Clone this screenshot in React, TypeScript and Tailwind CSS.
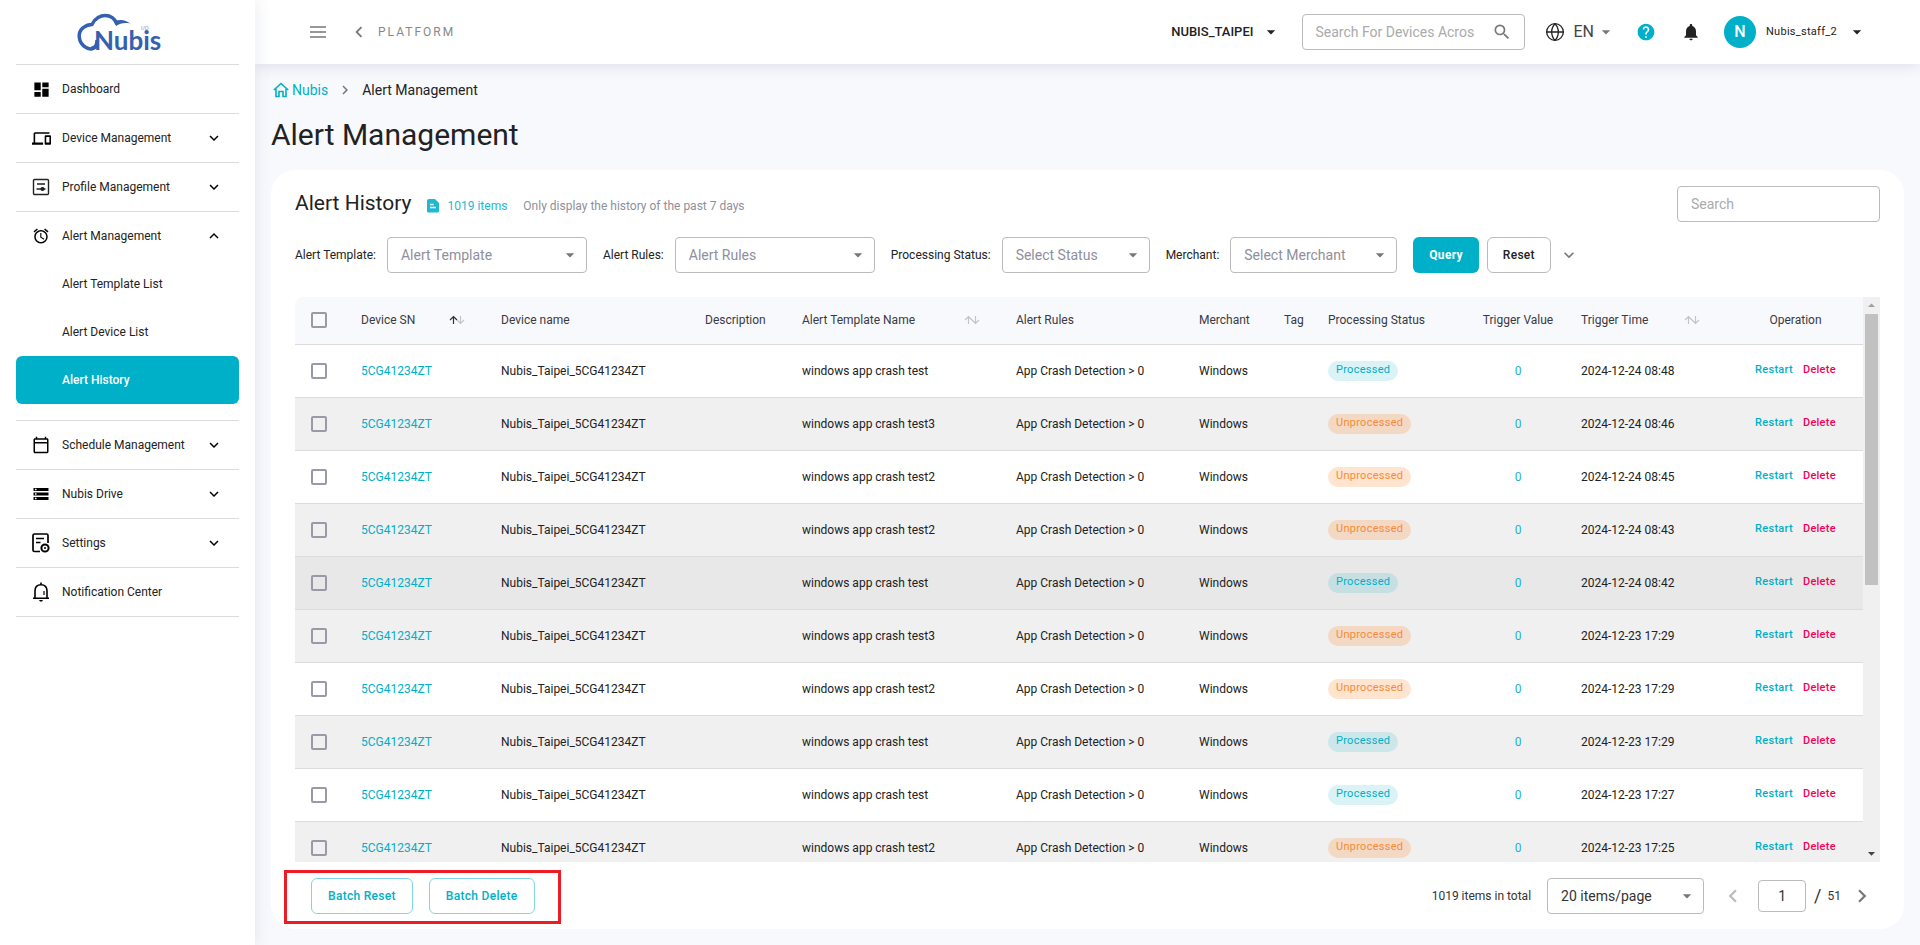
import { type ReactNode } from 'react'
import clsx from 'clsx'
import { Globe } from 'lucide-react'
import {
    MdAlarm,
    MdArrowDropDown,
    MdArrowDropUp,
    MdChevronLeft,
    MdChevronRight,
    MdDashboard,
    MdDevices,
    MdExpandLess,
    MdExpandMore,
    MdHelp,
    MdNotifications,
    MdOutlineCalendarToday,
    MdSearch,
    MdStorage,
} from 'react-icons/md'

interface AlertItem {
    template: string
    processed: boolean
    time: string
}

const alerts: AlertItem[] = [
    { template: 'windows app crash test', processed: true, time: '2024-12-24 08:48' },
    { template: 'windows app crash test3', processed: false, time: '2024-12-24 08:46' },
    { template: 'windows app crash test2', processed: false, time: '2024-12-24 08:45' },
    { template: 'windows app crash test2', processed: false, time: '2024-12-24 08:43' },
    { template: 'windows app crash test', processed: true, time: '2024-12-24 08:42' },
    { template: 'windows app crash test3', processed: false, time: '2024-12-23 17:29' },
    { template: 'windows app crash test2', processed: false, time: '2024-12-23 17:29' },
    { template: 'windows app crash test', processed: true, time: '2024-12-23 17:29' },
    { template: 'windows app crash test', processed: true, time: '2024-12-23 17:27' },
    { template: 'windows app crash test2', processed: false, time: '2024-12-23 17:25' },
]

// row that is currently highlighted
const activeRow = 4

function Logo() {
    return (
        <svg width="96" height="44" viewBox="0 0 96 44" role="img" aria-label="Nubis">
            <g fill="none" stroke="#3560ae" strokeWidth="3.500" strokeLinejoin="round">
                <path d="M20 33C17 37 13 38 9 35.500C1 31 0 20 6.500 15.500C9 13.500 12 12.500 15 12.500C18 6 24 3.500 28 3.500C34 3.500 38 7 40 12" />
                <path d="M14 36.500C19 36.500 20 32 20 28" />
            </g>
            <path d="M37 9.500C43 7 49 8 53 11.500C47 10.500 43 11.500 39 14Z" fill="#3560ae" />
            <text x="17" y="38" fontSize="26" fontWeight="700" fill="#3560ae" fontFamily="Lato, sans-serif">Nubis</text>
            <text x="64" y="18" fontSize="5" fill="#6c8cc7" fontFamily="Lato, sans-serif">I/O</text>
        </svg>
    )
}

function ProfileIcon() {
    return (
        <svg width="18" height="18" viewBox="0 0 18 18" fill="none" stroke="#222" strokeWidth="1.400">
            <rect x="1.500" y="1.500" width="15" height="15" rx="1" />
            <path d="M5 6H13M4.500 11H13.500" />
            <circle cx="10.500" cy="11" r="1.400" fill="#222" />
        </svg>
    )
}

function SettingsIcon() {
    return (
        <svg width="18" height="20" viewBox="0 0 18 20" fill="none" stroke="#000" strokeWidth="1.700">
            <path d="M8 18.500H2.500Q1 18.500 1 17V2.500Q1 1 2.500 1H14.500Q16 1 16 2.500V10" />
            <path d="M4 5.500H12M4 9.500H8.500" strokeWidth="1.500" />
            <circle cx="13" cy="15" r="3.600" strokeWidth="2" />
            <circle cx="13" cy="15" r="1" fill="#000" stroke="none" />
        </svg>
    )
}

function BellIcon() {
    return (
        <svg width="18" height="20" viewBox="0 0 18 20" fill="none" stroke="#000" strokeWidth="1.600">
            <path d="M1 16.200H17M3 16V9C3 5 5.500 2.700 9 2.700S15 5 15 9V16M9 0.500V2.500" />
            <path d="M7 18H11L10 19.500H8Z" fill="#000" stroke="none" />
            <path d="M12 9V13" strokeWidth="1.200" />
        </svg>
    )
}

function HomeIcon() {
    return (
        <svg width="16" height="16" viewBox="0 0 16 16" fill="none" stroke="#00afc8" strokeWidth="1.600">
            <path d="M0.800 8L8 1.500L15.200 8M3 6.800V14.500H6V9.500H10V14.500H13V6.800" />
        </svg>
    )
}

function NoteIcon() {
    return (
        <svg width="12" height="14" viewBox="0 0 12 14">
            <path d="M2 0H8L12 4V12Q12 13.500 10.500 13.500H1.500Q0 13.500 0 12V2Q0 0 2 0Z" fill="#1fb8d1" />
            <path d="M3 5.500H6.500M3 8.500H9" stroke="#fff" strokeWidth="1.300" />
        </svg>
    )
}

function SortIcon({ active }: { active?: boolean }) {
    return (
        <svg width="16" height="10" viewBox="0 0 16 10" fill="none" strokeWidth="1.200">
            <path d="M4.500 9V1.500M1 5L4.500 1.500L8 5" stroke={active ? '#333' : '#c4c4c8'} />
            <path d="M11.500 1V8.500M8 5L11.500 8.500L15 5" stroke="#c4c4c8" />
        </svg>
    )
}

function NavItem({ icon, label, chevron }: { icon: ReactNode; label: string; chevron?: 'up' | 'down' }) {
    return (
        <button type="button" className="flex h-12 w-full items-center pl-2 pr-4 text-left">
            <span className="flex w-[34px] justify-center">{icon}</span>
            <span className="ml-1 flex-1">{label}</span>
            {chevron === 'down' && <MdExpandMore size={18} className="text-black" />}
            {chevron === 'up' && <MdExpandLess size={18} className="text-black" />}
        </button>
    )
}

function Sidebar() {
    return (
        <aside className="z-20 flex w-[255px] shrink-0 flex-col bg-white px-4 text-xs text-[#222] shadow-[0_0_16px_rgba(60,70,100,0.12)]">
            <div className="flex h-16 items-center pl-[61px] pt-1">
                <Logo />
            </div>
            <nav>
                <ul className="divide-y divide-[#dcdcdc] border-y border-[#dcdcdc]">
                    <li><NavItem icon={<MdDashboard size={19} className="text-black" />} label="Dashboard" /></li>
                    <li><NavItem icon={<MdDevices size={19} className="text-black" />} label="Device Management" chevron="down" /></li>
                    <li><NavItem icon={<ProfileIcon />} label="Profile Management" chevron="down" /></li>
                    <li className="pb-4">
                        <NavItem icon={<MdAlarm size={18} className="text-black" />} label="Alert Management" chevron="up" />
                        <a href="#template" className="flex h-12 items-center pl-[46px]">Alert Template List</a>
                        <a href="#device" className="flex h-12 items-center pl-[46px]">Alert Device List</a>
                        <a href="#history" className="flex h-12 items-center rounded-md bg-[#00afc8] pl-[46px] font-medium text-white">
                            Alert History
                        </a>
                    </li>
                    <li><NavItem icon={<MdOutlineCalendarToday size={18} className="text-black" />} label="Schedule Management" chevron="down" /></li>
                    <li><NavItem icon={<MdStorage size={18} className="text-black" />} label="Nubis Drive" chevron="down" /></li>
                    <li><NavItem icon={<SettingsIcon />} label="Settings" chevron="down" /></li>
                    <li><NavItem icon={<BellIcon />} label="Notification Center" /></li>
                </ul>
            </nav>
        </aside>
    )
}

function TopBar() {
    return (
        <header className="z-10 flex h-16 shrink-0 items-center bg-white pl-[55px] pr-[54px] shadow-[0_2px_14px_rgba(60,70,100,0.14)]">
            <button type="button" aria-label="Menu">
                <svg width="16" height="12" viewBox="0 0 16 12" stroke="#777" strokeWidth="1.500">
                    <path d="M0 1H16M0 6H16M0 11H16" />
                </svg>
            </button>
            <button type="button" className="ml-[22px] flex items-center text-xs tracking-[2px] text-[#888]">
                <MdChevronLeft size={22} className="mr-2 text-[#777]" />
                PLATFORM
            </button>
            <button type="button" className="ml-auto flex items-center text-[13px] font-medium text-[#222]">
                NUBIS_TAIPEI
                <MdArrowDropDown size={20} className="ml-2" />
            </button>
            <div className="ml-[21px] flex h-9 w-[223px] items-center rounded border border-[#bbb] pl-3 pr-3">
                <input
                    type="text"
                    aria-label="Search devices"
                    placeholder="Search For Devices Across"
                    className="w-40 min-w-0 text-sm outline-none placeholder:text-[#aaa]"
                />
                <MdSearch size={20} className="ml-auto shrink-0 text-[#777]" />
            </div>
            <button type="button" className="ml-5 flex items-center text-base text-[#444]">
                <Globe size={20} strokeWidth={1.600} className="mr-2 text-[#222]" />
                EN
                <MdArrowDropDown size={20} className="ml-0.5 text-[#777]" />
            </button>
            <button type="button" aria-label="Help" className="ml-5">
                <MdHelp size={20} className="text-[#00afc8]" />
            </button>
            <button type="button" aria-label="Notifications" className="ml-[25px]">
                <MdNotifications size={20} className="text-[#222]" />
            </button>
            <button type="button" className="ml-[23px] flex items-center text-[11px] tracking-wide text-[#222]">
                <span className="mr-2.5 flex size-8 items-center justify-center rounded-full bg-[#00afc8] text-base font-medium text-white">
                    N
                </span>
                Nubis_staff_2
                <MdArrowDropDown size={20} className="-mr-px ml-2.5" />
            </button>
        </header>
    )
}

function FilterSelect({ id, label, placeholder, className }: { id: string; label: string; placeholder: string; className: string }) {
    return (
        <div className="flex items-center gap-[11px]">
            <label htmlFor={id} className="whitespace-nowrap text-xs">{label}</label>
            <div className={clsx('relative', className)}>
                <select
                    id={id}
                    className="h-9 w-full appearance-none rounded border border-[#bbb] bg-white pl-[13px] pr-8 text-sm text-[#8f8f9c]"
                >
                    <option>{placeholder}</option>
                </select>
                <MdArrowDropDown size={20} className="pointer-events-none absolute right-[7px] top-2 text-[#777]" />
            </div>
        </div>
    )
}

function Checkbox({ label }: { label: string }) {
    return (
        <input
            type="checkbox"
            aria-label={label}
            className="block size-4 appearance-none rounded-xs border-2 border-[#9a99a8]"
        />
    )
}

function SortHeader({ label, active }: { label: string; active?: boolean }) {
    return (
        <th className="pl-4 pr-5 font-normal">
            <button type="button" className="flex w-full items-center justify-between whitespace-nowrap">
                {label}
                <SortIcon active={active} />
            </button>
        </th>
    )
}

function AlertTable() {
    return (
        <table className="w-full table-fixed text-xs text-[#222]">
            <colgroup>
                <col className="w-[50px]" />
                <col className="w-[140px]" />
                <col className="w-[204px]" />
                <col className="w-[97px]" />
                <col className="w-[214px]" />
                <col />
                <col className="w-[85px]" />
                <col className="w-[44px]" />
                <col className="w-[153px]" />
                <col className="w-[100px]" />
                <col className="w-[155px]" />
                <col className="w-[143px]" />
            </colgroup>
            <thead>
                <tr className="h-[47px] border-b border-[#dcdcdc] bg-[#f8f9fd] text-left text-[#3a3a42]">
                    <th className="pl-4"><Checkbox label="Select all" /></th>
                    <SortHeader label="Device SN" active />
                    <th className="pl-4 font-normal">Device name</th>
                    <th className="pl-4 font-normal">Description</th>
                    <SortHeader label="Alert Template Name" />
                    <th className="pl-4 font-normal">Alert Rules</th>
                    <th className="pl-4 font-normal">Merchant</th>
                    <th className="pl-4 font-normal">Tag</th>
                    <th className="pl-4 font-normal">Processing Status</th>
                    <th className="whitespace-nowrap pl-4 pr-2.5 text-center font-normal">Trigger Value</th>
                    <SortHeader label="Trigger Time" />
                    <th className="pl-2 text-center font-normal">Operation</th>
                </tr>
            </thead>
            <tbody>
                {alerts.map((item, index) => (
                    <tr
                        key={index}
                        className={clsx(
                            'h-[53px] border-b border-[#dcdcdc]',
                            index === activeRow ? 'bg-[#e8e8e8]' : index % 2 ? 'bg-[#f0f0f0]' : 'bg-white',
                        )}
                    >
                        <td className="pl-4"><Checkbox label={`Select row ${index + 1}`} /></td>
                        <td className="pl-4"><a href="#device" className="text-[#00afc8]">5CG41234ZT</a></td>
                        <td className="pl-4">Nubis_Taipei_5CG41234ZT</td>
                        <td />
                        <td className="pl-4">{item.template}</td>
                        <td className="pl-4">App Crash Detection &gt; 0</td>
                        <td className="pl-4">Windows</td>
                        <td />
                        <td className="pl-4">
                            <span
                                className={clsx(
                                    'flex h-5 w-fit items-center rounded-full px-2 text-[11px] tracking-wide',
                                    item.processed ? 'bg-[#00afc8]/15 text-[#00afc8]' : 'bg-[#ff7a14]/20 text-[#f98b38]',
                                )}
                            >
                                {item.processed ? 'Processed' : 'Unprocessed'}
                            </span>
                        </td>
                        <td className="pl-4 pr-2.5 text-center text-[#1fb2cb]">0</td>
                        <td className="pl-4">{item.time}</td>
                        <td className="pl-2">
                            <div className="flex justify-center gap-2.5 text-[11px] font-medium tracking-wide">
                                <button type="button" className="text-[#00afc8]">Restart</button>
                                <button type="button" className="text-[#f50057]">Delete</button>
                            </div>
                        </td>
                    </tr>
                ))}
            </tbody>
        </table>
    )
}

function ScrollTrack() {
    return (
        <div className="flex w-[17px] shrink-0 flex-col items-center bg-[#f0f0f0]">
            <MdArrowDropUp size={17} className="shrink-0 text-[#a0a0a0]" />
            <div className="h-[48%] w-[13px] bg-[#c1c1c1]" />
            <MdArrowDropDown size={17} className="mt-auto shrink-0 text-[#444]" />
        </div>
    )
}

function Footer() {
    return (
        <div className="relative flex h-[67px] shrink-0 items-center pl-4">
            <div className="flex gap-4 text-xs font-medium tracking-wide text-[#00afc8]">
                <button type="button" className="h-9 rounded-md border border-[#7fd7e3] px-4">Batch Reset</button>
                <button type="button" className="h-9 rounded-md border border-[#7fd7e3] px-4">Batch Delete</button>
            </div>
            <div className="pointer-events-none absolute -left-[11px] top-2 h-[54px] w-[277px] border-3 border-[#ed1c24]" />
            <div className="ml-auto flex items-center pr-[5px] text-xs text-[#333]">
                <label htmlFor="page-size">1019 items in total</label>
                <div className="relative ml-4 w-[157px]">
                    <select id="page-size" className="h-9 w-full appearance-none rounded border border-[#bbb] bg-white pl-[13px] text-sm">
                        <option>20 items/page</option>
                    </select>
                    <MdArrowDropDown size={20} className="pointer-events-none absolute right-[7px] top-2 text-[#777]" />
                </div>
                <button type="button" aria-label="Previous page" className="ml-4">
                    <MdChevronLeft size={26} className="text-[#bbb]" />
                </button>
                <input
                    type="text"
                    aria-label="Page"
                    defaultValue="1"
                    className="ml-3 h-8 w-12 rounded border border-[#bbb] text-center text-sm"
                />
                <span className="ml-2 text-lg">/</span>
                <span className="ml-1.5">51</span>
                <button type="button" aria-label="Next page" className="ml-2">
                    <MdChevronRight size={26} className="text-[#777]" />
                </button>
            </div>
        </div>
    )
}

export default function App() {
    return (
        <div className="flex h-screen bg-[#f8f9fd] font-[Roboto,sans-serif] text-[#222]">
            <Sidebar />
            <div className="flex min-w-0 flex-1 flex-col">
                <TopBar />
                <main className="flex min-h-0 flex-1 flex-col p-4">
                    <div className="flex h-5 items-center pl-0.5 text-sm">
                        <a href="#home" className="flex items-center gap-[3px] text-[#00afc8]">
                            <HomeIcon />
                            Nubis
                        </a>
                        <MdChevronRight size={18} className="mx-2 text-[#777]" />
                        <span>Alert Management</span>
                    </div>
                    <h1 className="mb-4 mt-4 text-3xl leading-[38px]">Alert Management</h1>
                    <section className="flex min-h-0 flex-1 flex-col rounded-3xl bg-white px-6 pt-4">
                        <div className="flex h-9 items-center">
                            <h2 className="text-[21px]">Alert History</h2>
                            <div className="flex items-center pt-1 text-xs">
                                <span className="ml-4 flex items-center gap-2 text-[#1fb8d1]">
                                    <NoteIcon />
                                    1019 items
                                </span>
                                <span className="ml-4 text-[#8f8f9c]">Only display the history of the past 7 days</span>
                            </div>
                            <input
                                type="text"
                                aria-label="Search alerts"
                                placeholder="Search"
                                className="ml-auto h-9 w-[203px] rounded border border-[#bbb] px-[13px] text-sm placeholder:text-[#aaa]"
                            />
                        </div>
                        <div className="mt-[15px] flex items-center">
                            <div className="flex gap-4">
                                <FilterSelect id="template" label="Alert Template:" placeholder="Alert Template" className="w-[200px]" />
                                <FilterSelect id="rules" label="Alert Rules:" placeholder="Alert Rules" className="w-[200px]" />
                                <FilterSelect id="status" label="Processing Status:" placeholder="Select Status" className="w-[148px]" />
                                <FilterSelect id="merchant" label="Merchant:" placeholder="Select Merchant" className="w-[167px]" />
                            </div>
                            <button type="button" className="ml-4 h-9 rounded-md bg-[#00afc8] px-4 text-xs font-bold tracking-wide text-white">
                                Query
                            </button>
                            <button type="button" className="ml-2 h-9 rounded-md border border-[#bbb] px-[15px] text-xs font-medium tracking-wide">
                                Reset
                            </button>
                            <button type="button" aria-label="More filters" className="ml-2">
                                <MdExpandMore size={20} className="text-[#777]" />
                            </button>
                        </div>
                        <div className="mt-6 flex min-h-0 flex-1 overflow-hidden rounded-tl-lg">
                            <div className="min-w-0 flex-1 overflow-hidden">
                                <AlertTable />
                            </div>
                            <ScrollTrack />
                        </div>
                        <Footer />
                    </section>
                </main>
            </div>
        </div>
    )
}
